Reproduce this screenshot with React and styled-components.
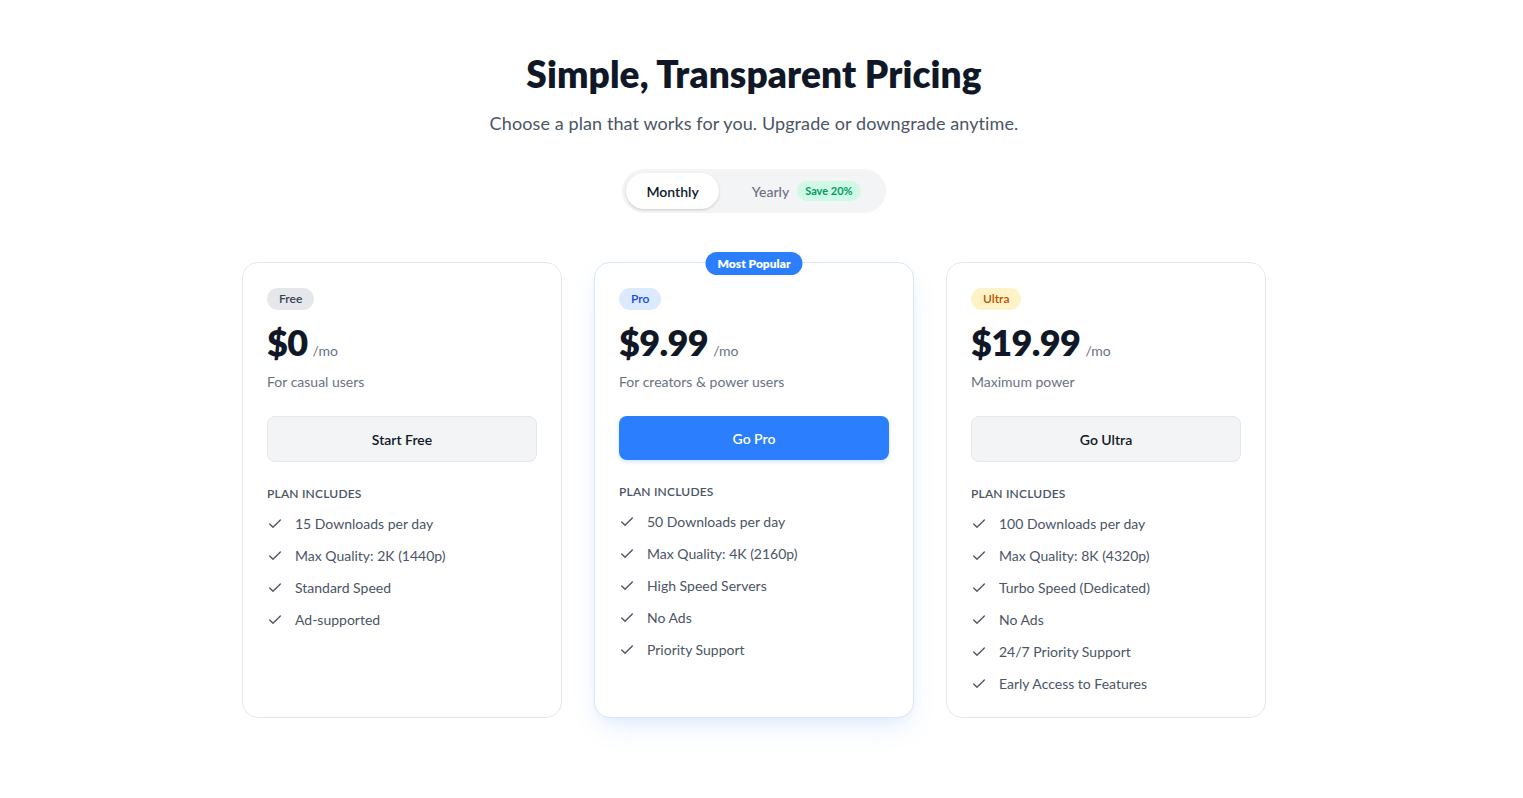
import React, { useState } from "react";
import styled, { createGlobalStyle } from "styled-components";

const GlobalStyle = createGlobalStyle`
  * { box-sizing: border-box; }
  body {
    margin: 0;
    background: #ffffff;
    font-family: Lato, "Open Sans", Arial, sans-serif;
    color: #101828;
  }
`;

const Page = styled.div`
  display: flex;
  flex-direction: column;
  align-items: center;
  padding: 54px 15px 80px 0;
`;

const Title = styled.h1`
  margin: 0;
  font-size: 37px;
  line-height: 40px;
  font-weight: 800;
  letter-spacing: 0.1px;
  color: #101828;
`;

const Subtitle = styled.p`
  margin: 15px 0 0;
  font-size: 18px;
  line-height: 28px;
  letter-spacing: 0.1px;
  color: #4a5565;
`;

const Toggle = styled.div`
  margin-top: 32px;
  display: flex;
  align-items: center;
  padding: 4px;
  height: 44px;
  border-radius: 999px;
  background: #f3f4f6;
`;

const ToggleOption = styled.button`
  display: flex;
  align-items: center;
  gap: 8px;
  height: 36px;
  padding: ${(p) => (p.$active ? "0 20px" : "0 21px 0 33px")};
  border: none;
  border-radius: 999px;
  white-space: nowrap;
  font-family: inherit;
  font-size: 14px;
  font-weight: ${(p) => (p.$active ? 600 : 500)};
  color: ${(p) => (p.$active ? "#101828" : "#6a7282")};
  background: ${(p) => (p.$active ? "#ffffff" : "transparent")};
  box-shadow: ${(p) =>
    p.$active ? "0 1px 3px rgba(0,0,0,0.12), 0 1px 2px rgba(0,0,0,0.06)" : "none"};
  cursor: pointer;
`;

const SaveTag = styled.span`
  font-size: 11px;
  line-height: 14px;
  font-weight: 700;
  color: #009966;
  background: #d0fae5;
  padding: 3px 8px;
  border-radius: 999px;
  white-space: nowrap;
`;

const Grid = styled.div`
  margin-top: 49px;
  display: grid;
  grid-template-columns: repeat(3, 320px);
  gap: 32px;
`;

const Card = styled.div`
  position: relative;
  display: flex;
  flex-direction: column;
  padding: 25px 24px 23px;
  border-radius: 16px;
  background: #ffffff;
  border: 1px solid ${(p) => (p.$featured ? "#dde6f3" : "#e5e7eb")};
  box-shadow: ${(p) =>
    p.$featured ? "0 12px 28px -6px rgba(59,130,246,0.16), 0 4px 10px -4px rgba(59,130,246,0.08)" : "none"};
`;

const Popular = styled.div`
  position: absolute;
  top: -11px;
  left: 50%;
  transform: translateX(-50%);
  padding: 4px 12px;
  border-radius: 999px;
  background: #2b7fff;
  color: #ffffff;
  font-size: 12px;
  line-height: 15px;
  font-weight: 800;
  white-space: nowrap;
`;

const tiers = {
  gray: { bg: "#e5e7eb", fg: "#364153" },
  blue: { bg: "#dbeafe", fg: "#1447e6" },
  amber: { bg: "#fef3c6", fg: "#bb4d00" },
};

const Badge = styled.span`
  align-self: flex-start;
  padding: 3px 12px;
  border-radius: 999px;
  font-size: 12px;
  line-height: 16px;
  font-weight: 600;
  background: ${(p) => tiers[p.$tone].bg};
  color: ${(p) => tiers[p.$tone].fg};
`;

const PriceRow = styled.div`
  display: flex;
  align-items: baseline;
  gap: 5px;
  margin-top: 12px;
`;

const Amount = styled.span`
  font-size: 36px;
  line-height: 40px;
  font-weight: 800;
  color: #101828;
  letter-spacing: -0.6px;
`;

const Per = styled.span`
  font-size: 14px;
  color: #6a7282;
`;

const Desc = styled.p`
  margin: 10px 0 0;
  font-size: 14px;
  line-height: 20px;
  color: #6a7282;
`;

const CTA = styled.button`
  margin-top: 24px;
  height: ${(p) => (p.$primary ? "44px" : "46px")};
  border-radius: 8px;
  font-family: inherit;
  font-size: 14px;
  font-weight: 600;
  cursor: pointer;
  border: ${(p) => (p.$primary ? "none" : "1px solid #e5e7eb")};
  background: ${(p) => (p.$primary ? "#2b7fff" : "#f3f4f6")};
  color: ${(p) => (p.$primary ? "#ffffff" : "#101828")};
  box-shadow: ${(p) => (p.$primary ? "0 2px 4px rgba(43,127,255,0.2)" : "none")};
`;

const IncludesLabel = styled.div`
  margin-top: 24px;
  font-size: 12px;
  line-height: 16px;
  font-weight: 600;
  color: #4a5565;
  text-transform: uppercase;
  letter-spacing: 0.2px;
`;

const Features = styled.ul`
  list-style: none;
  margin: 12px 0 0;
  padding: 0;
  display: flex;
  flex-direction: column;
  gap: 12px;
`;

const Feature = styled.li`
  display: flex;
  align-items: center;
  gap: 12px;
  font-size: 14px;
  line-height: 20px;
  color: #4a5565;
`;

const CheckIcon = () => (
  <svg width="16" height="16" viewBox="0 0 24 24" fill="none" stroke="#4a5565" strokeWidth="2" strokeLinecap="round" strokeLinejoin="round">
    <path d="M20 6 9 17l-5-5" />
  </svg>
);

const plans = [
  {
    name: "Free",
    tone: "gray",
    price: "$0",
    desc: "For casual users",
    cta: "Start Free",
    features: ["15 Downloads per day", "Max Quality: 2K (1440p)", "Standard Speed", "Ad-supported"],
  },
  {
    name: "Pro",
    tone: "blue",
    price: "$9.99",
    desc: "For creators & power users",
    cta: "Go Pro",
    featured: true,
    features: ["50 Downloads per day", "Max Quality: 4K (2160p)", "High Speed Servers", "No Ads", "Priority Support"],
  },
  {
    name: "Ultra",
    tone: "amber",
    price: "$19.99",
    desc: "Maximum power",
    cta: "Go Ultra",
    features: [
      "100 Downloads per day",
      "Max Quality: 8K (4320p)",
      "Turbo Speed (Dedicated)",
      "No Ads",
      "24/7 Priority Support",
      "Early Access to Features",
    ],
  },
];

const App = () => {
  const [billing, setBilling] = useState("monthly");

  return (
    <>
      <GlobalStyle />
      <Page>
        <Title>Simple, Transparent Pricing</Title>
        <Subtitle>Choose a plan that works for you. Upgrade or downgrade anytime.</Subtitle>

        <Toggle>
          <ToggleOption $active={billing === "monthly"} onClick={() => setBilling("monthly")}>
            Monthly
          </ToggleOption>
          <ToggleOption $active={billing === "yearly"} onClick={() => setBilling("yearly")}>
            Yearly <SaveTag>Save 20%</SaveTag>
          </ToggleOption>
        </Toggle>

        <Grid>
          {plans.map((plan) => (
            <Card key={plan.name} $featured={plan.featured}>
              {plan.featured && <Popular>Most Popular</Popular>}
              <Badge $tone={plan.tone}>{plan.name}</Badge>
              <PriceRow>
                <Amount>{plan.price}</Amount>
                <Per>/mo</Per>
              </PriceRow>
              <Desc>{plan.desc}</Desc>
              <CTA $primary={plan.featured}>{plan.cta}</CTA>
              <IncludesLabel>Plan includes</IncludesLabel>
              <Features>
                {plan.features.map((f) => (
                  <Feature key={f}>
                    <CheckIcon />
                    {f}
                  </Feature>
                ))}
              </Features>
            </Card>
          ))}
        </Grid>
      </Page>
    </>
  );
};

export default App;
